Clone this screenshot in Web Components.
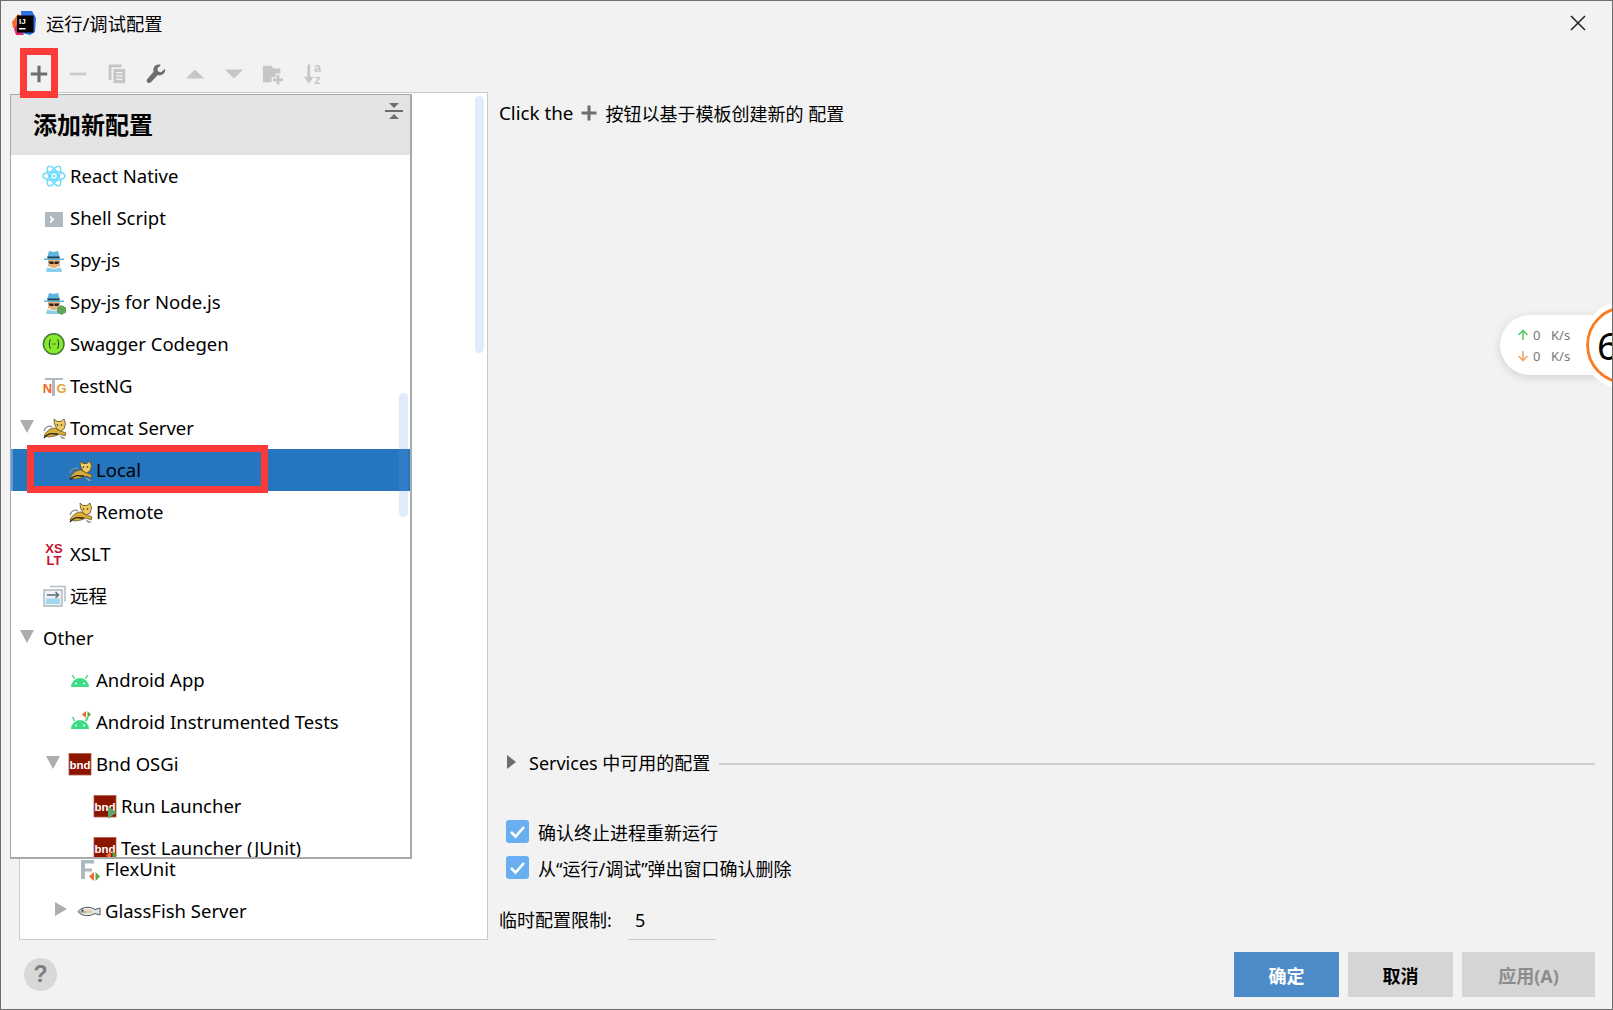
<!DOCTYPE html>
<html lang="zh-CN">
<head>
<meta charset="utf-8">
<title>运行/调试配置</title>
<style>
  html, body { margin: 0; padding: 0; background: #f2f2f2; }
  body { font-family: "Noto Sans", "Noto Sans CJK SC", sans-serif; color: #000; }
</style>
</head>
<body>

<run-dialog>
  <window-title slot="title">运行/调试配置</window-title>
  <tool-bar slot="toolbar"></tool-bar>

  <tree-box slot="tree">
    <tree-row indent="26" icon="flex">FlexUnit</tree-row>
    <tree-row indent="26" arrow="right" icon="fish">GlassFish Server</tree-row>
  </tree-box>

  <right-panel slot="right">
    <services-row>Services 中可用的配置</services-row>
    <check-row>确认终止进程重新运行</check-row>
    <check-row>从“运行/调试”弹出窗口确认删除</check-row>
    <limit-row label="临时配置限制:" value="5"></limit-row>
  </right-panel>

  <help-button slot="help"></help-button>
  <dialog-button slot="buttons" kind="primary">确定</dialog-button>
  <dialog-button slot="buttons">取消</dialog-button>
  <dialog-button slot="buttons" kind="disabled" wide>应用(A)</dialog-button>

  <add-popup slot="overlay" heading="添加新配置">
    <tree-row icon="react">React Native</tree-row>
    <tree-row icon="shell">Shell Script</tree-row>
    <tree-row icon="spy">Spy-js</tree-row>
    <tree-row icon="spynode">Spy-js for Node.js</tree-row>
    <tree-row icon="swagger">Swagger Codegen</tree-row>
    <tree-row icon="testng">TestNG</tree-row>
    <tree-row arrow="down" icon="tomcat">Tomcat Server</tree-row>
    <tree-row indent="26" icon="tomcat" selected>Local</tree-row>
    <tree-row indent="26" icon="tomcat">Remote</tree-row>
    <tree-row icon="xslt">XSLT</tree-row>
    <tree-row icon="remote">远程</tree-row>
    <tree-row arrow="down" noicon>Other</tree-row>
    <tree-row indent="26" icon="android">Android App</tree-row>
    <tree-row indent="26" icon="androidtest">Android Instrumented Tests</tree-row>
    <tree-row indent="26" arrow="down" icon="bnd">Bnd OSGi</tree-row>
    <tree-row indent="51" icon="bndrun">Run Launcher</tree-row>
    <tree-row indent="51" icon="bndtest">Test Launcher (JUnit)</tree-row>
  </add-popup>

  <net-speed slot="overlay"></net-speed>
  <mark-box slot="overlay" style="left:19px;top:47px;width:38px;height:50px"></mark-box>
  <mark-box slot="overlay" style="left:26px;top:444px;width:241px;height:48px"></mark-box>
</run-dialog>

<script>
  const FONT = `"Noto Sans", "Noto Sans CJK SC", sans-serif`;

  const bndBase = `<rect x="1" y="1.500" width="22" height="21.500" fill="#8c1500" stroke="#b55a4c" stroke-width=".8"/>
    <text x="12" y="17" text-anchor="middle" font-family="Liberation Sans" font-weight="700" font-size="11.500" fill="#fff">bnd</text>`;
  const androidBody = `<path d="M3 19a9 9 0 0 1 18 0z" fill="#3ddc84"/>
    <path d="M6.500 11 4.500 7M17.500 11 19.500 7" stroke="#3ddc84" stroke-width="1.400"/>
    <circle cx="8" cy="15.500" r="1" fill="#fff"/><circle cx="16" cy="15.500" r="1" fill="#fff"/>`;
  const tomcat = `<path d="M2 15C3 11 7 9 10 11" fill="none" stroke="#888" stroke-width="1.200"/>
    <path d="M2 20C5 14 9 12 13 12l6 3 5 2-1 3-5-2-5 2-6 1z" fill="#d9ae38" stroke="#5a4a20" stroke-width=".7"/>
    <path d="M12 3l3 2.500h4L22 3l1.500 5-1.500 5-3.500 2-3.500-2-2.500-5z" fill="#f0cc60" stroke="#5a4a20" stroke-width=".8"/>
    <circle cx="15.500" cy="9" r=".8" fill="#222"/><circle cx="19.500" cy="9" r=".8" fill="#222"/>
    <path d="M2 22c3-4 7-5 11-4h3" fill="none" stroke="#222" stroke-width="1.300"/>
    <path d="M17 19l7 3.500-4 .5z" fill="#999"/>`;
  const spy = `<path d="M5 10 7 3l4.500 1L16 3l2 7z" fill="#5db6dc"/><path d="M2 10.500h20v1.500H2z" fill="#5db6dc"/>
    <path d="M5.500 8.500h12v2h-12z" fill="#23404d"/>
    <path d="M6 12h12v6l-6 2.500L6 18z" fill="#e3b27f"/>
    <path d="M6.500 13.500h5v2.500H8zM12.500 13.500h5L16 16h-3.500z" fill="#2b2118"/>
    <path d="M4 24l1-4.500 7 1.500 7-1.500 1 4.500z" fill="#8ccfea"/>`;
  const diamonds = (x, y) => `<path d="M${x} ${y}l-5 4.500 5 4.500z" fill="#ee6b2f"/><path d="M${x + 1.500} ${y}l4.500 4.500-4.500 4.500z" fill="#5aa83c"/>`;

  const ICONS = {
    react: `<g fill="none" stroke="#72dcf8" stroke-width="1.500"><ellipse cx="12" cy="12" rx="11" ry="4.500"/><ellipse cx="12" cy="12" rx="11" ry="4.500" transform="rotate(60 12 12)"/><ellipse cx="12" cy="12" rx="11" ry="4.500" transform="rotate(120 12 12)"/><circle cx="12" cy="12" r="3.500"/></g><circle cx="12" cy="12" r="1.500" fill="#72dcf8"/>`,
    shell: `<rect x="3" y="6" width="18" height="15" fill="#afb9c1"/><path d="M8 9.500l4.500 4L8 17.500v-2.600l1.800-1.400L8 12.100z" fill="#fff"/>`,
    spy,
    spynode: spy + `<path d="M19.500 15l4.500 2.500v5L19.500 25 15 22.500v-5z" fill="#62a55a"/>`,
    swagger: `<circle cx="11.700" cy="12" r="10.300" fill="#85ea2d" stroke="#44793a" stroke-width="1.500"/><path d="M9 7.500c-2 0-1.200 3.500-1.700 4.500.5 1-.3 4.500 1.700 4.500M15 7.500c2 0 1.200 3.500 1.700 4.500-.5 1 .3 4.500-1.700 4.500" fill="none" stroke="#1f3b1a" stroke-width="1"/><path d="M10 12h.9M11.600 12h.9M13.200 12h.9" stroke="#1f3b1a" stroke-width="1"/>`,
    testng: `<path d="M3 4h18v2h-8v16h-3V6H3z" fill="#aeb8bf"/><text x="5.500" y="18.500" text-anchor="middle" font-family="Liberation Sans" font-weight="700" font-size="13" fill="#f26522">N</text><text x="19.500" y="18.500" text-anchor="middle" font-family="Liberation Sans" font-weight="700" font-size="13" fill="#e0a83a">G</text>`,
    tomcat,
    xslt: `<g font-family="Liberation Sans" font-weight="700" font-size="13" fill="#c8102e" text-anchor="middle"><text x="12" y="11">XS</text><text x="12" y="23">LT</text></g>`,
    remote: `<path d="M8 2.500h15v15" fill="none" stroke="#b4bdc4" stroke-width="1.500"/><rect x="2" y="6" width="18" height="16" fill="#eef2f4" stroke="#aeb8bf" stroke-width="1.500"/><rect x="4" y="14.500" width="14" height="5.500" fill="#9fd8ef"/><path d="M5 11h11M13.500 8l3 3-3 3" fill="none" stroke="#5d6a73" stroke-width="1.400"/>`,
    android: androidBody,
    androidtest: androidBody + `<path d="M18 11l2-3" stroke="#3ddc84" stroke-width="1.400"/><path d="M18 1l-4 3.500L18 8z" fill="#ee6b2f"/><path d="M19.500 1l3.500 3.500L19.500 8z" fill="#5aa83c"/>`,
    bnd: bndBase,
    bndrun: bndBase + `<path d="M15 12.500 24 18.500 15 24.500z" fill="#59a869"/>`,
    bndtest: bndBase + diamonds(18, 15),
    flex: `<path d="M4 3h13v3.500H8v5h7v3H8V22H4z" fill="#aeb8bf"/>` + diamonds(17, 15),
    fish: `<path d="M1 12.500C4 8.500 12 6.500 18 10.500L23 9v7l-5-1.500C12 18 4 17 1 12.500z" fill="#e4e7e8" stroke="#555" stroke-width="1"/><path d="M2 13h13" stroke="#8a8f92" stroke-width="1.300"/><circle cx="5.500" cy="11.500" r="1" fill="#222"/><rect x="9" y="11" width="6" height="3" fill="#e6cf9a"/>`
  };

  const TOOLS = {
    plus: `<path d="M10.300 3h3.400v7.300H21v3.400h-7.300V21h-3.400v-7.300H3v-3.400h7.300z" fill="#6e6e6e"/>`,
    minus: `<rect x="3" y="10.500" width="18" height="3" fill="#cbcbcb"/>`,
    copy: `<path d="M3 1.500h14v3H6v14H3z" fill="#c6c6c6"/><path d="M8 6.500h13v15.500H8z" fill="#c6c6c6"/><path d="M11 10.500h7M11 14h7M11 17.500h7" stroke="#f2f2f2" stroke-width="1.300"/>`,
    wrench: `<path d="M21.500 6.500l-4 3.500-3.200-.8-.8-3.200 3.800-3.800c-3-1.200-6.500 0-7.800 3-.6 1.400-.6 2.900-.1 4.300L2.500 17.500c-1.200 1.300-.8 3 .2 3.700 1 .9 2.600.9 3.700-.2l7.600-7.800c2.900 1 6.200-.2 7.500-3 .6-1.200.7-2.500.4-3.700z" fill="#6e6e6e"/>`,
    up: `<path d="M2 17 12 7l10 10z" fill="#c6c6c6"/>`,
    down: `<path d="M2 7h20L12 17z" fill="#c6c6c6"/>`,
    folder: `<path d="M1 3h9l2.500 3H20v5.500h-5v4h-4.500V21H1z" fill="#c6c6c6"/><path d="M16 13h3v4h4v3h-4v3.500h-3V20h-4v-3h4z" fill="#c6c6c6"/>`,
    sort: `<path d="M7 1.500h3v13.500h4l-5.500 7L3 15h4z" fill="#c6c6c6"/><g font-family="Liberation Sans" font-weight="700" font-size="14" fill="#c6c6c6" text-anchor="middle"><text x="18" y="10">a</text><text x="18" y="22.500">z</text></g>`
  };

  class RunDialog extends HTMLElement {
    constructor() {
      super();
      this.attachShadow({ mode: "open" });
    }

    connectedCallback() {
      this.shadowRoot.innerHTML = `
        <style>
          :host {
            display: flex;
            flex-direction: column;
            position: relative;
            box-sizing: border-box;
            width: 1613px;
            height: 1010px;
            border: 1px solid #6d6d6d;
            background: #f2f2f2;
            overflow: hidden;
          }
          .main { display: flex; height: 848px; padding-left: 18px; }
          .footer { display: flex; flex: 1; justify-content: space-between; padding: 12px 17px 0 23px; }
          .buttons { display: flex; gap: 9px; }
        </style>
        <slot name="title"></slot>
        <slot name="toolbar"></slot>
        <div class="main">
          <slot name="tree"></slot>
          <slot name="right"></slot>
        </div>
        <div class="footer">
          <slot name="help"></slot>
          <div class="buttons"><slot name="buttons"></slot></div>
        </div>
        <slot name="overlay"></slot>
      `;
    }
  }

  class WindowTitle extends HTMLElement {
    constructor() {
      super();
      this.attachShadow({ mode: "open" });
    }

    connectedCallback() {
      this.shadowRoot.innerHTML = `
        <style>
          :host {
            display: flex;
            align-items: center;
            box-sizing: border-box;
            height: 46px;
            padding: 0 25px 3px 11px;
            font: 18.300px ${FONT};
          }
          .logo { width: 24px; height: 24px; margin-right: 10px; }
          .text { flex: 1; }
          .close { width: 18px; height: 18px; }
        </style>
        <svg class="logo" viewBox="0 0 24 24">
          <path d="M0 11 6 3l5 3-3 10-7 1z" fill="#f26a2e"/>
          <path d="M2 18l4-6 6 12H4z" fill="#e0246e"/>
          <path d="M9 0h11l4 7-1 14-5 3-8-2z" fill="#2c6fe0"/>
          <rect x="5" y="4.500" width="16.500" height="17" fill="#000"/>
          <text x="7" y="13" font-family="Liberation Sans" font-weight="700" font-size="8" fill="#fff">IJ</text>
          <rect x="7" y="17" width="6.500" height="1.500" fill="#fff"/>
        </svg>
        <span class="text"><slot></slot></span>
        <svg class="close" viewBox="0 0 18 18"><path d="M2 2l14 14M16 2 2 16" stroke="#222" stroke-width="1.500"/></svg>
      `;
    }
  }

  class ToolBar extends HTMLElement {
    constructor() {
      super();
      this.attachShadow({ mode: "open" });
    }

    connectedCallback() {
      const cells = Object.keys(TOOLS)
        .map(k => `<span class="cell"><svg viewBox="0 0 24 24">${TOOLS[k]}</svg></span>`)
        .join("");
      this.shadowRoot.innerHTML = `
        <style>
          :host { display: flex; height: 45px; padding: 8px 0 0 18.500px; box-sizing: border-box; }
          .cell { display: flex; align-items: center; justify-content: center; width: 39px; height: 37px; }
          svg { width: 22px; height: 22px; overflow: visible; }
        </style>
        ${cells}
      `;
    }
  }

  class TreeBox extends HTMLElement {
    constructor() {
      super();
      this.attachShadow({ mode: "open" });
    }

    connectedCallback() {
      this.shadowRoot.innerHTML = `
        <style>
          :host {
            display: flex;
            flex-direction: column;
            justify-content: flex-end;
            position: relative;
            box-sizing: border-box;
            width: 469px;
            height: 848px;
            padding-bottom: 7px;
            background: #fff;
            border: 1px solid #cacaca;
          }
          .thumb {
            position: absolute;
            left: 455px;
            top: 3px;
            width: 9px;
            height: 257px;
            border-radius: 5px;
            background: #e0ecfb;
          }
        </style>
        <slot></slot>
        <div class="thumb"></div>
      `;
    }
  }

  class TreeRow extends HTMLElement {
    constructor() {
      super();
      this.attachShadow({ mode: "open" });
    }

    connectedCallback() {
      const indent = this.getAttribute("indent") || 0;
      const arrow = this.getAttribute("arrow");
      const icon = this.getAttribute("icon");
      const arrowSvg = arrow === "down"
        ? `<svg width="14" height="13" viewBox="0 0 14 13"><path d="M0 0h14L7 13z" fill="#adadad"/></svg>`
        : arrow === "right"
          ? `<svg width="12" height="14" viewBox="0 0 12 14"><path d="M0 0l12 7-12 7z" fill="#adadad"/></svg>`
          : "";
      const iconEl = icon
        ? `<svg class="icon" viewBox="1 0 24 24">${ICONS[icon]}</svg>`
        : "";
      this.shadowRoot.innerHTML = `
        <style>
          :host {
            display: flex;
            align-items: center;
            flex: none;
            box-sizing: border-box;
            height: 42px;
            padding-left: ${indent}px;
            font: 18.500px ${FONT};
            white-space: nowrap;
          }
          :host([selected]) { background: #2675bf; box-shadow: inset 2px 0 0 #5a9fe6; }
          .arrow { display: flex; align-items: center; width: 23px; padding-left: 9px; height: 100%; margin-top: -4px; }
          .icon { width: 24px; height: 24px; margin-right: 3px; flex: none; overflow: visible; }
          .label { padding-bottom: 2px; }
        </style>
        <span class="arrow">${arrowSvg}</span>
        ${iconEl}
        <span class="label"><slot></slot></span>
      `;
    }
  }

  class AddPopup extends HTMLElement {
    constructor() {
      super();
      this.attachShadow({ mode: "open" });
    }

    connectedCallback() {
      const heading = this.getAttribute("heading") || "";
      this.shadowRoot.innerHTML = `
        <style>
          :host {
            display: flex;
            flex-direction: column;
            position: absolute;
            left: 9px;
            top: 93px;
            box-sizing: border-box;
            width: 402px;
            height: 765px;
            background: #fff;
            border: solid #a9a9a9;
            border-width: 1px 2px 2px 1px;
            overflow: hidden;
          }
          .head {
            display: flex;
            align-items: center;
            justify-content: space-between;
            flex: none;
            height: 60px;
            padding: 0 6px 0 22px;
            background: #e4e4e4;
            font: 700 24px ${FONT};
          }
          .head span { padding-bottom: 4px; }
          .head svg { width: 20px; height: 20px; align-self: flex-start; margin-top: 7px; }
          .list { position: relative; flex: 1; overflow: hidden; }
          .thumb {
            position: absolute;
            left: 388px;
            top: 238px;
            width: 9px;
            height: 124px;
            border-radius: 5px;
            background: rgba(100, 160, 235, .2);
          }
        </style>
        <div class="head">
          <span>${heading}</span>
          <svg viewBox="0 0 20 20">
            <path d="M5 1h10l-5 5zM5 17h10l-5-5z" fill="#6e6e6e"/>
            <rect x="1" y="8" width="18" height="2" fill="#6e6e6e"/>
          </svg>
        </div>
        <div class="list"><slot></slot><div class="thumb"></div></div>
      `;
    }
  }

  class RightPanel extends HTMLElement {
    constructor() {
      super();
      this.attachShadow({ mode: "open" });
    }

    connectedCallback() {
      this.shadowRoot.innerHTML = `
        <style>
          :host {
            display: flex;
            flex-direction: column;
            flex: 1;
            padding: 6px 17px 0 11px;
            font: 18px ${FONT};
          }
          .hint { display: flex; align-items: center; height: 30px; white-space: pre; }
          .hint b { font-weight: 400; font-size: 18.800px; }
          .hint svg { width: 18px; height: 18px; margin: 0 7px; }
          .fill { flex: 1; }
        </style>
        <div class="hint"><b>Click the</b><svg viewBox="0 0 18 18"><path d="M7.500 1.500h3v6h6v3h-6v6h-3v-6h-6v-3h6z" fill="#6e6e6e"/></svg>按钮以基于模板创建新的 配置</div>
        <div class="fill"></div>
        <slot></slot>
      `;
    }
  }

  class ServicesRow extends HTMLElement {
    constructor() {
      super();
      this.attachShadow({ mode: "open" });
    }

    connectedCallback() {
      this.shadowRoot.innerHTML = `
        <style>
          :host { display: flex; align-items: center; height: 30px; margin-bottom: 36px; }
          svg { width: 9px; height: 14px; margin: 0 13px 2px 8px; }
          .text { padding-bottom: 2px; }
          .line { flex: 1; height: 2px; margin: 2px 0 0 9px; background: #cfcfcf; }
        </style>
        <svg viewBox="0 0 9 14"><path d="M0 0l9 7-9 7z" fill="#6e6e6e"/></svg>
        <span class="text"><slot></slot></span>
        <span class="line"></span>
      `;
    }
  }

  class CheckRow extends HTMLElement {
    constructor() {
      super();
      this.attachShadow({ mode: "open" });
    }

    connectedCallback() {
      this.shadowRoot.innerHTML = `
        <style>
          :host { display: flex; align-items: center; height: 36px; }
          svg { width: 23px; height: 23px; margin: -2px 9px 0 7px; }
          .text { padding-bottom: 1px; }
        </style>
        <svg viewBox="0 0 23 23">
          <rect width="23" height="23" rx="3" fill="#68aef0"/>
          <path d="M5 12l4.500 4.500L18 7" fill="none" stroke="#fff" stroke-width="2.600"/>
        </svg>
        <span class="text"><slot></slot></span>
      `;
    }
  }

  class LimitRow extends HTMLElement {
    constructor() {
      super();
      this.attachShadow({ mode: "open" });
    }

    connectedCallback() {
      const label = this.getAttribute("label");
      const value = this.getAttribute("value");
      this.shadowRoot.innerHTML = `
        <style>
          :host { display: flex; height: 38px; margin-top: 16px; }
          .label { width: 129px; line-height: 36px; }
          .value {
            box-sizing: border-box;
            width: 88px;
            height: 38px;
            padding-left: 7px;
            line-height: 36px;
            border-bottom: 1px solid #c8c8c8;
          }
        </style>
        <span class="label">${label}</span>
        <span class="value">${value}</span>
      `;
    }
  }

  class HelpButton extends HTMLElement {
    constructor() {
      super();
      this.attachShadow({ mode: "open" });
    }

    connectedCallback() {
      this.shadowRoot.innerHTML = `
        <style>
          :host {
            display: flex;
            align-items: center;
            justify-content: center;
            width: 33px;
            height: 33px;
            margin-top: 6px;
            border-radius: 50%;
            background: #d8d8d8;
            color: #7e7e7e;
            font: 700 23px "Liberation Sans", sans-serif;
          }
        </style>
        ?
      `;
    }
  }

  class DialogButton extends HTMLElement {
    constructor() {
      super();
      this.attachShadow({ mode: "open" });
    }

    connectedCallback() {
      this.shadowRoot.innerHTML = `
        <style>
          :host {
            display: flex;
            align-items: center;
            justify-content: center;
            width: 105px;
            height: 45px;
            background: #d5d5d5;
            font: 700 18px ${FONT};
          }
          :host([wide]) { width: 133px; }
          :host([kind="primary"]) { background: #4d8bc9; color: #fff; }
          :host([kind="disabled"]) { color: #8c8c8c; }
        </style>
        <slot></slot>
      `;
    }
  }

  class MarkBox extends HTMLElement {
    constructor() {
      super();
      this.attachShadow({ mode: "open" });
    }

    connectedCallback() {
      this.shadowRoot.innerHTML = `
        <style>
          :host { display: block; position: absolute; box-sizing: border-box; border: 7px solid #fc3a3a; }
        </style>
      `;
    }
  }

  class NetSpeed extends HTMLElement {
    constructor() {
      super();
      this.attachShadow({ mode: "open" });
    }

    connectedCallback() {
      this.shadowRoot.innerHTML = `
        <style>
          :host {
            display: block;
            position: absolute;
            left: 1499px;
            top: 314px;
            width: 150px;
            height: 60px;
            box-sizing: border-box;
            padding: 9px 0 0 17px;
            border-radius: 30px;
            background: #fff;
            box-shadow: 0 2px 10px rgba(0, 0, 0, .14);
            font: 13px ${FONT};
            color: #777;
          }
          .row { display: flex; align-items: center; height: 21px; }
          .row svg { width: 12px; height: 12px; margin-right: 4px; }
          .num { width: 18px; }
          .ring {
            display: flex;
            align-items: center;
            position: absolute;
            left: 86px;
            top: -9px;
            box-sizing: border-box;
            width: 78px;
            height: 78px;
            padding-left: 8px;
            border: 3px solid #f97c22;
            border-radius: 50%;
            outline: 5px solid #fff;
            background: #fff;
            color: #000;
            font: 38px ${FONT};
          }
        </style>
        <div class="row">
          <svg viewBox="0 0 12 12"><path d="M6 11V2M1.500 6 6 1.500 10.500 6" fill="none" stroke="#5cca6c" stroke-width="1.600"/></svg>
          <span class="num">0</span><span>K/s</span>
        </div>
        <div class="row">
          <svg viewBox="0 0 12 12"><path d="M6 1v9M1.500 6 6 10.500 10.500 6" fill="none" stroke="#f7a868" stroke-width="1.600"/></svg>
          <span class="num">0</span><span>K/s</span>
        </div>
        <div class="ring">6</div>
      `;
    }
  }

  customElements.define("run-dialog", RunDialog);
  customElements.define("window-title", WindowTitle);
  customElements.define("tool-bar", ToolBar);
  customElements.define("tree-box", TreeBox);
  customElements.define("tree-row", TreeRow);
  customElements.define("add-popup", AddPopup);
  customElements.define("right-panel", RightPanel);
  customElements.define("services-row", ServicesRow);
  customElements.define("check-row", CheckRow);
  customElements.define("limit-row", LimitRow);
  customElements.define("help-button", HelpButton);
  customElements.define("dialog-button", DialogButton);
  customElements.define("mark-box", MarkBox);
  customElements.define("net-speed", NetSpeed);
</script>
</body>
</html>
